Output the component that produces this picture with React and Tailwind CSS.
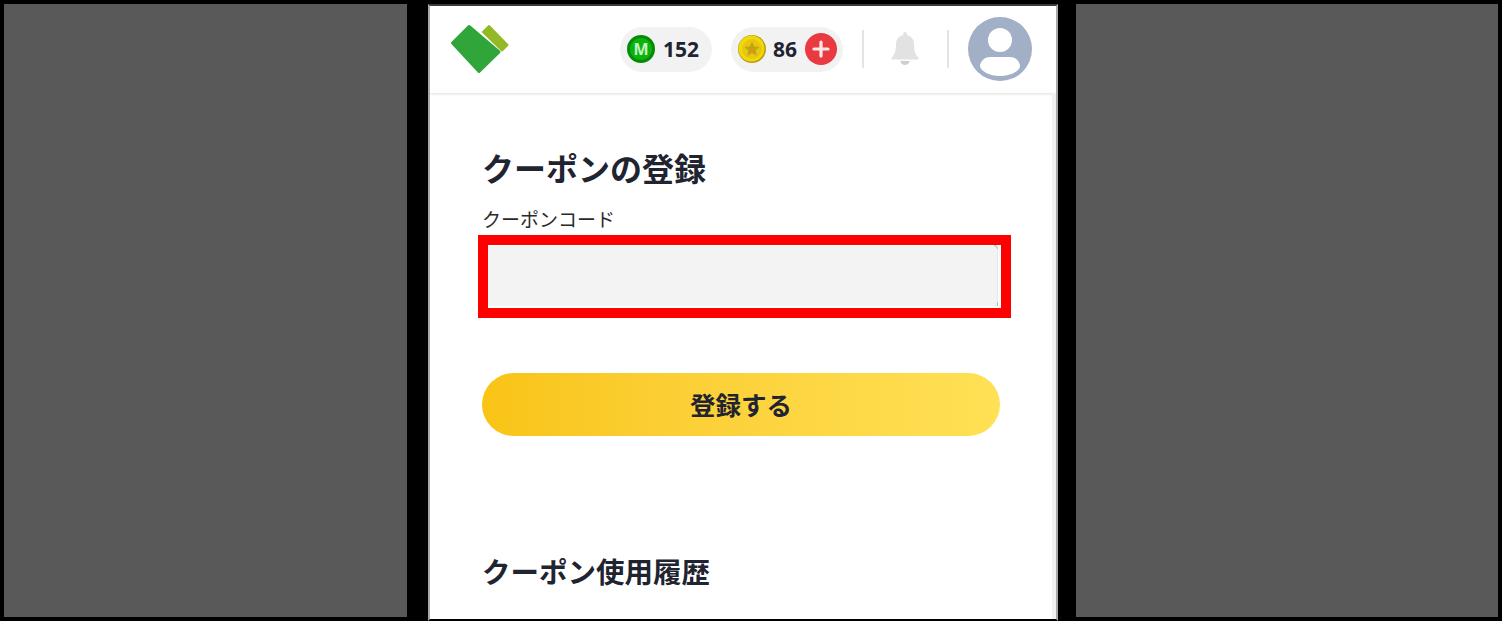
const jp = "font-['Noto_Sans_CJK_JP','Noto_Sans',sans-serif]";

function Logo() {
  return (
    <svg width="60" height="50" viewBox="0 0 60 50" className="block shrink-0">
      <path d="M2.500 19 L19 2.500 L49 28 L29 47.500 Z" fill="#2fa53a" stroke="#2fa53a" strokeWidth="3" strokeLinejoin="round" />
      <path d="M33 8 L39 2 L57.500 21 L52 26.500 Z" fill="#93b926" stroke="#93b926" strokeWidth="2" strokeLinejoin="round" />
    </svg>
  );
}

function CoinM() {
  return (
    <div className="w-[28px] h-[28px] rounded-full bg-[#0cb30c] border-[3px] border-[#078a07] flex items-center justify-center shrink-0">
      <span className="text-[16px] leading-none font-bold text-[#c4f3c4] font-['Noto_Sans']">M</span>
    </div>
  );
}

function CoinStar() {
  return (
    <svg width="28" height="28" viewBox="0 0 28 28" className="shrink-0">
      <circle cx="14" cy="14" r="14" fill="#bd9c0c" />
      <circle cx="13.500" cy="13.500" r="13" fill="#f0d80e" />
      <circle cx="14" cy="14" r="10" fill="#e6c80b" />
      <path d="M14 6.500l2.300 5 5.200.5-3.900 3.500 1.100 5.200L14 18l-4.700 2.700 1.100-5.200L6.500 12l5.200-.5z" fill="#c9a014" />
    </svg>
  );
}

function Bell() {
  return (
    <svg width="30" height="35" viewBox="0 0 32 38" className="block">
      <path d="M16 1c1.200 0 2 .9 2 2v1.400c5 1.100 7.800 5 7.800 10.300 0 6 1 10.300 4.500 14 .9 1 .3 2.300-1 2.300H2.700c-1.300 0-1.900-1.300-1-2.300 3.500-3.700 4.500-8 4.500-14 0-5.300 2.800-9.200 7.800-10.300V3c0-1.100.8-2 2-2z" fill="#e2e2e2" />
      <path d="M11 32.500h10c-.4 2.700-2.400 4.500-5 4.500s-4.600-1.800-5-4.500z" fill="#cfcfcf" />
    </svg>
  );
}

function Avatar() {
  return (
    <svg width="64" height="64" viewBox="0 0 64 64" className="block">
      <circle cx="32" cy="32" r="32" fill="#a1b0c6" />
      <circle cx="32" cy="23" r="12" fill="#fff" />
      <path d="M22 40H42C48 40 52 45 52 49C52 54 42 59 32 59C22 59 12 54 12 49C12 45 16 40 22 40Z" fill="#fff" />
    </svg>
  );
}

export default function App() {
  return (
    <div className={`w-[1502px] h-[621px] bg-black flex overflow-hidden ${jp}`}>
      <div className="ml-1 mt-1 w-[403px] h-[613px] bg-[#595959]" />
      <main className="ml-[21px] mt-1 w-[630px] h-[617px] bg-white border-x-2 border-[#a8a8a8] border-t-2 border-t-[#3a3a3a] border-b-2 border-b-black flex flex-col text-[#1f2430] overflow-hidden">
        <header className="h-[87px] shrink-0 shadow-[0_1px_3px_rgba(0,0,0,0.13)] flex items-center pl-[20px] pr-[24px] pb-[2px]">
          <Logo />
          <div className="ml-auto mt-[1px] h-[45px] w-[92px] rounded-full bg-[#f2f2f2] flex items-center pl-[7px] gap-[8px]">
            <CoinM />
            <span className="text-[21px] font-bold font-['Noto_Sans'] leading-none">152</span>
          </div>
          <div className="ml-[19px] mt-[1px] h-[45px] w-[112px] rounded-full bg-[#f2f2f2] flex items-center pl-[7px]">
            <CoinStar />
            <span className="ml-[7px] text-[21px] font-bold font-['Noto_Sans'] leading-none">86</span>
            <div className="ml-[8px] w-[32px] h-[32px] rounded-full bg-[#e83a40] flex items-center justify-center">
              <svg width="18" height="18" viewBox="0 0 18 18"><path d="M9 2v14M2 9h14" stroke="#fde8e8" strokeWidth="3.200" strokeLinecap="round" /></svg>
            </div>
          </div>
          <div className="ml-[19px] w-[2px] h-[38px] bg-[#e4e4e4]" />
          <div className="ml-[26px]"><Bell /></div>
          <div className="ml-[27px] w-[2px] h-[38px] bg-[#e4e4e4]" />
          <div className="ml-[19px]"><Avatar /></div>
        </header>
        <section className="flex-1 pl-[48px] flex flex-col border-r-[4px] border-[#f1f1f4]">
          <h1 className="mt-[51px] ml-[4px] text-[32px] leading-[46px] font-bold text-[#1f2430] whitespace-nowrap">クーポンの登録</h1>
          <label className="mt-[15px] ml-[4px] text-[19px] leading-[28px] text-[#2a2a2a]">クーポンコード</label>
          <div className="mt-[2px] w-[533px] h-[83px] border-[10px] border-[#ff0000] bg-white pt-px">
            <div className="relative w-[510px] h-[60px] bg-[#f3f3f3] rounded-r-[3px] border-r border-[#e9e9e9]">
              <span className="absolute -top-px -right-px w-[4px] h-[4px] border-t border-r border-[#b9b9b9] rounded-tr-[4px]" />
              <span className="absolute bottom-0 -right-px w-px h-[4px] bg-[#b9b9b9]" />
            </div>
          </div>
          <button className="mt-[55px] ml-[4px] w-[518px] h-[63px] rounded-full bg-gradient-to-r from-[#f9c414] to-[#ffe155] text-[25.500px] font-bold text-[#1f2430] flex items-center justify-center">登録する</button>
          <h2 className="mt-[112px] ml-[4px] text-[28.500px] leading-[46px] font-bold text-[#1f2430] whitespace-nowrap">クーポン使用履歴</h2>
        </section>
      </main>
      <div className="ml-[18px] mt-1 w-[422px] h-[613px] bg-[#595959]" />
    </div>
  );
}
